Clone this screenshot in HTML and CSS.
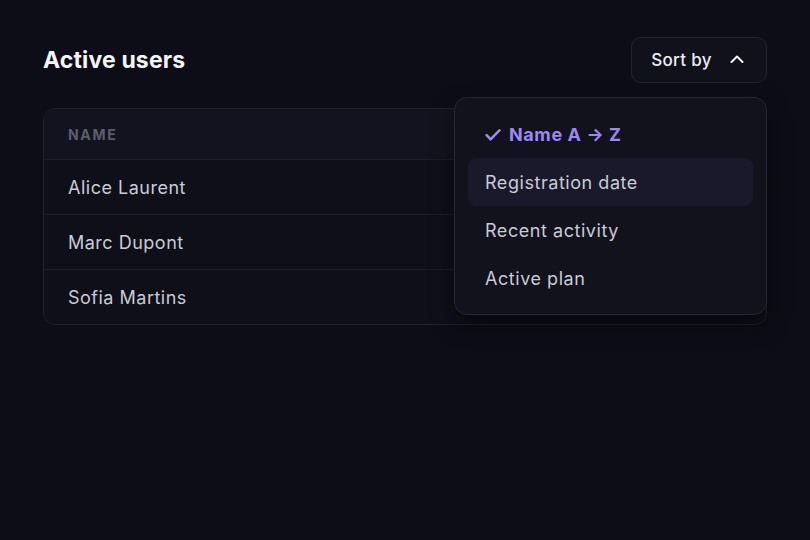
FILE: index.html
```html
<!DOCTYPE html>
<html lang="en">
<head>
<meta charset="utf-8">
<title>Active users</title>
<link rel="stylesheet" href="styles.css">
</head>
<body>
<main class="page">
  <header class="toolbar">
    <h1 class="title">Active users</h1>
    <div class="sort">
      <button class="sort-btn" type="button">
        <span>Sort by</span>
        <svg class="chev" width="14" height="8" viewBox="0 0 14 8" aria-hidden="true"><path d="M1.5 7 L7 1.5 L12.5 7" fill="none" stroke="currentColor" stroke-width="2" stroke-linecap="round" stroke-linejoin="round"/></svg>
      </button>
      <ul class="menu">
        <li class="menu-item selected"><svg class="check" width="16" height="12" viewBox="0 0 16 12" aria-hidden="true"><path d="M1.6 6.2 L5.6 10.4 L14.4 1.4" fill="none" stroke="currentColor" stroke-width="2.6" stroke-linecap="round" stroke-linejoin="round"/></svg><span>Name A → Z</span></li>
        <li class="menu-item hover">Registration date</li>
        <li class="menu-item">Recent activity</li>
        <li class="menu-item">Active plan</li>
      </ul>
    </div>
  </header>
  <section class="card">
    <div class="row head">NAME</div>
    <div class="row">Alice Laurent</div>
    <div class="row">Marc Dupont</div>
    <div class="row">Sofia Martins</div>
  </section>
</main>
</body>
</html>
```

FILE: styles.css
```css
* { box-sizing: border-box; }
html, body { margin: 0; height: 100%; }
body {
  background: #0c0d17;
  font-family: Inter, "Noto Sans", sans-serif;
  color: #c9cbd6;
}
.page {
  padding: 37px 43px;
}
.toolbar {
  display: flex;
  justify-content: space-between;
  align-items: center;
  margin-bottom: 25px;
}
.title {
  margin: 0;
  font-size: 23px;
  font-weight: 700;
  color: #f4f5fa;
  letter-spacing: 0.15px;
}
.sort { position: relative; }
.sort-btn {
  display: flex;
  align-items: center;
  gap: 18px;
  height: 46px;
  padding: 0 22px 0 19px;
  background: #10111b;
  border: 1px solid #232433;
  border-radius: 10px;
  color: #eceef5;
  font: 500 17px Inter, "Noto Sans", sans-serif;
  letter-spacing: 0.35px;
}
.chev { color: #f2f3f8; margin-top: -2px; }
.menu {
  position: absolute;
  right: 0;
  top: 60px;
  width: 313px;
  margin: 0;
  padding: 12px 13px;
  list-style: none;
  background: #11121c;
  border: 1px solid #262736;
  border-radius: 13px;
  box-shadow: 0 10px 24px rgba(0,0,0,0.45);
  z-index: 2;
}
.menu-item {
  height: 48px;
  display: flex;
  align-items: center;
  padding: 0 17px;
  border-radius: 8px;
  font-size: 18px;
  letter-spacing: 0.55px;
  color: #c9cbd6;
  white-space: pre;
}
.menu-item.selected {
  color: #9b87f5;
  font-weight: 700;
  letter-spacing: 0.6px;
  gap: 8px;
}
.check { flex: none; margin-top: 2px; }
.menu-item.hover { background: #19192b; }
.card {
  border: 1px solid #1f2030;
  border-radius: 12px;
  background: #0e0f19;
  overflow: hidden;
}
.row {
  height: 55px;
  display: flex;
  align-items: center;
  padding: 0 24px;
  font-size: 18px;
  letter-spacing: 0.5px;
  color: #c9cbd6;
  border-top: 1px solid #1c1d2a;
}
.row.head {
  height: 50px;
  border-top: 0;
  background: #12131e;
  font-size: 14px;
  font-weight: 700;
  letter-spacing: 1.7px;
  color: #5c5e6e;
}
```
